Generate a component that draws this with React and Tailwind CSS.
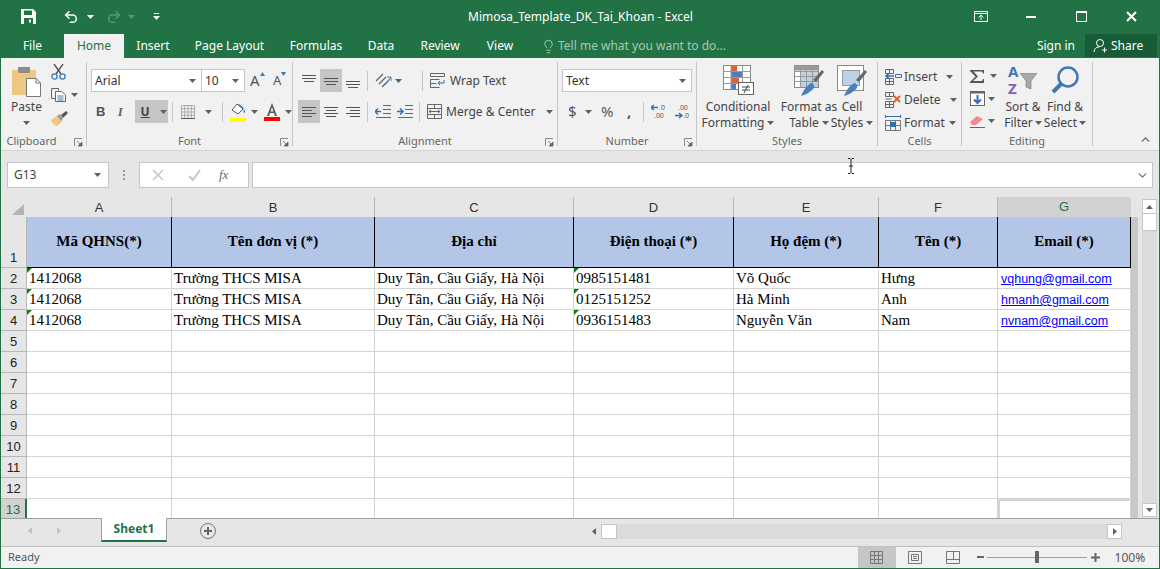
import { Undo2, Redo2, Lightbulb, ChevronDown, ChevronUp } from "lucide-react";

const uiFont = { fontFamily: '"Noto Sans", "Open Sans", sans-serif' };

const Caret = ({ className = "" }) => (
  <svg width="7" height="4" viewBox="0 0 7 4" className={`shrink-0 ${className}`}>
    <path d="M0 0h7L3.5 4z" fill="#606060" />
  </svg>
);

const Launcher = () => (
  <svg width="9" height="9" viewBox="0 0 9 9" className="absolute right-[3px] top-[3px]">
    <path d="M0.5 8V0.5H8" fill="none" stroke="#8a8a8a" />
    <path d="M3 3l4 4M8 4v4H4z" fill="#666" stroke="#666" strokeWidth="0.8" />
  </svg>
);

const Group = ({ className, label, launcher, children }) => (
  <div className={`flex flex-col h-[84px] shrink-0 border-r border-[#c6c6c6] ${className}`}>
    <div className="h-[73px] shrink-0">{children}</div>
    <div className="relative h-[11px] flex items-center justify-center text-[11px] text-[#666] leading-none">
      {label}
      {launcher && <Launcher />}
    </div>
  </div>
);

const Lines = ({ rows }) => (
  <svg width="16" height="14" viewBox="0 0 16 14">
    {rows.map(([x1, x2, y]) => (
      <path key={y} d={`M${x1} ${y + 0.5}H${x2}`} stroke="#555" />
    ))}
  </svg>
);

const Paste = () => (
  <svg width="29" height="30" viewBox="0 0 29 30">
    <rect x="0" y="3" width="24" height="25" rx="1" fill="#eec880" />
    <rect x="6" y="0" width="12" height="6" rx="1" fill="#8c8c8c" />
    <path d="M14.5 11.5H24l4.5 4.5V29.5H14.5z" fill="#fff" stroke="#777" />
    <path d="M24 11.5V16h4.5" fill="none" stroke="#777" />
  </svg>
);

const Scissors = () => (
  <svg width="15" height="16" viewBox="0 0 15 16" fill="none">
    <path d="M3 0l7 10M12 0L5 10" stroke="#555" strokeWidth="1.4" />
    <circle cx="3.5" cy="12.5" r="2.6" stroke="#3f78b5" strokeWidth="1.3" />
    <circle cx="11.5" cy="12.5" r="2.6" stroke="#3f78b5" strokeWidth="1.3" />
  </svg>
);

const CopyIcon = () => (
  <svg width="15" height="14" viewBox="0 0 15 14" fill="none">
    <path d="M.5.5h7v2M.5.5v10h4" stroke="#666" />
    <path d="M4.5 3.5h6l4 3.5v6.5h-10z" fill="#fff" stroke="#666" />
    <path d="M6.5 8h6M6.5 10h6M6.5 12h6" stroke="#3f78b5" />
  </svg>
);

const Brush = () => (
  <svg width="17" height="15" viewBox="0 0 17 15">
    <path d="M0 9l6-4 5 6-5 4C4 15 1 12 0 9z" fill="#eec880" />
    <path d="M6 5l3-2 3 5-2 2z" fill="#9a9a9a" />
    <path d="M10 4l5-4 2 2-5 5z" fill="#555" />
  </svg>
);

const BordersIcon = () => (
  <svg width="14" height="14" viewBox="0 0 14 14" fill="none">
    <path d="M.5.5h13v13h-13zM7 .5v13M.5 7h13M3.7.5v13M10.3.5v13M.5 3.7h13M.5 10.3h13" stroke="#777" strokeDasharray="1 1" />
    <path d="M0 13.5h14" stroke="#555" />
  </svg>
);

const FillColor = () => (
  <svg width="16" height="20" viewBox="0 0 16 20">
    <path d="M2 8l5-6 6 5-5 5z" fill="#fff" stroke="#555" />
    <path d="M14 7c1 2 1.500 3 .5 4-1-.5-1.500-2-.5-4z" fill="#3f78b5" />
    <path d="M9 2l5 4-1 1-5-4z" fill="#3f78b5" />
    <rect y="16" width="16" height="4" fill="#ffff00" />
  </svg>
);

const FontColor = () => (
  <svg width="16" height="20" viewBox="0 0 16 20">
    <path d="M8 1L3 14h2l1-3h4l1 3h2L8 1zm0 4l1.500 4.500h-3z" fill="#555" />
    <rect y="15" width="16" height="4" fill="#ff0000" />
  </svg>
);

const Orientation = () => (
  <svg width="18" height="18" viewBox="0 0 18 18" fill="none">
    <path d="M1 9l7-7M4 12l7-7M7 15l7-7" stroke="#666" strokeWidth="1.300" />
    <path d="M10 13l6-8M16 5v4M16 5h-4" stroke="#3f78b5" />
  </svg>
);

const Indent = ({ flip }) => (
  <svg width="16" height="13" viewBox="0 0 16 13" fill="none">
    <path d="M8 .5h8M8 4.500h8M8 8.500h8M1 12.500h15" stroke="#666" />
    {flip ? <path d="M0 6.500h6M3 3.500l-3 3 3 3" stroke="#2f6fb5" strokeWidth="1.500" /> : <path d="M0 6.500h6M3 3.500l3 3-3 3" stroke="#2f6fb5" strokeWidth="1.500" />}
  </svg>
);

const WrapIcon = () => (
  <svg width="15" height="15" viewBox="0 0 15 15" fill="none">
    <path d="M.5.5h14v3H.5zM.5 6.500h9M.5 6.500v8h9M.5 10.500h6" stroke="#666" />
    <path d="M14 7v3H8M10 8l-2 2 2 2" stroke="#2f6fb5" />
  </svg>
);

const MergeIcon = () => (
  <svg width="15" height="15" viewBox="0 0 15 15" fill="none">
    <path d="M.5.5h14v14H.5zM.5 4.500h14M.5 10.500h14M7.500.5v4M7.500 10.500v4" stroke="#666" />
    <path d="M2 7.500h11M4 6l-2 1.500L4 9M11 6l2 1.500L11 9" stroke="#2f6fb5" />
  </svg>
);

const DecimalIcon = ({ more }) => (
  <svg width="16" height="15" viewBox="0 0 16 15">
    <path d={more ? "M1 11.500h7M5 9l3 2.500L5 14" : "M0 3.500h7M3 1L0 3.500 3 6"} stroke="#2f6fb5" strokeWidth="1.400" fill="none" />
    <text x={more ? 4 : 8} y="6" fontSize="7" fill="#555" fontFamily="Liberation Sans">{more ? ".00" : ".0"}</text>
    <text x={more ? 9 : 3} y="14" fontSize="7" fill="#555" fontFamily="Liberation Sans">{more ? ".0" : ".00"}</text>
  </svg>
);

const CondFormat = () => (
  <svg width="31" height="30" viewBox="0 0 31 30" fill="none">
    <rect x=".5" y=".5" width="27" height="24" fill="#fff" stroke="#888" />
    <rect x="8" y="1" width="6" height="5" fill="#d9643a" />
    <rect x="8" y="7" width="11" height="5" fill="#4a80bd" />
    <rect x="8" y="13" width="8" height="5" fill="#d9643a" />
    <rect x="8" y="19" width="5" height="5" fill="#4a80bd" />
    <path d="M8 .5v24M19.500.5v24M.5 6.500h27M.5 12.500h27M.5 18.500h27" stroke="#999" />
    <rect x="15.500" y="17.500" width="15" height="12" fill="#fff" stroke="#666" />
    <path d="M19 22h8M19 25h8M25 20l-4 8" stroke="#444" />
  </svg>
);

const FormatTable = () => (
  <svg width="31" height="31" viewBox="0 0 31 31" fill="none">
    <rect x=".5" y=".5" width="24" height="22" fill="#fff" stroke="#888" />
    <rect x=".5" y=".5" width="24" height="5" fill="#999" />
    <rect x="6" y="6" width="18" height="16" fill="#bcd0e6" />
    <path d="M6.500.5v22M12.500.5v22M18.500.5v22M.5 6.500h24M.5 11.500h24M.5 16.500h24" stroke="#999" />
    <path d="M30 7l-8 10-3-2 9-10z" fill="#666" />
    <path d="M7 31c3-7 7-12 11-13 3 2 3 5 0 7-3 3-7 5-11 6z" fill="#4a80bd" />
  </svg>
);

const CellStyles = () => (
  <svg width="31" height="31" viewBox="0 0 31 31" fill="none">
    <rect x=".5" y=".5" width="26" height="25" fill="#fff" stroke="#888" />
    <rect x="5.500" y="5.500" width="17" height="15" fill="#bcd0e6" stroke="#999" />
    <path d="M30 7l-8 10-3-2 9-10z" fill="#666" />
    <path d="M7 31c3-7 7-12 11-13 3 2 3 5 0 7-3 3-7 5-11 6z" fill="#4a80bd" />
  </svg>
);

const InsertIcon = () => (
  <svg width="17" height="16" viewBox="0 0 17 16" fill="none">
    <path d="M.5.5h8v4h-8zM.5 9.500h8v6h-8zM4.500 9.500v6M.5 12.500h8M4.500.5v4" stroke="#666" />
    <path d="M1 7h8M4 4.500L1 7l3 2.500" stroke="#2f6fb5" strokeWidth="1.500" />
    <path d="M10.500 5.500h6v3h-6z" stroke="#2f6fb5" />
  </svg>
);

const DeleteIcon = () => (
  <svg width="17" height="16" viewBox="0 0 17 16" fill="none">
    <path d="M.5.5h8v4h-8zM.5 9.500h8v6h-8zM4.500 9.500v6M.5 12.500h8M4.500.5v4M.5 7h6" stroke="#666" />
    <path d="M9 4l6 6M15 4l-6 6" stroke="#e0603a" strokeWidth="2" />
  </svg>
);

const FormatIcon = () => (
  <svg width="16" height="16" viewBox="0 0 16 16" fill="none">
    <path d="M.5 5.500h15v10H.5zM.5 10.500h15M5.500 5.500v10M10.500 5.500v10" stroke="#777" />
    <rect x="5" y="7" width="6" height="5" fill="#2f6fb5" />
    <path d="M.5 0v3M15.500 0v3M1 1.500h14" stroke="#2f6fb5" />
  </svg>
);

const Sigma = () => (
  <svg width="15" height="13" viewBox="0 0 15 13">
    <path d="M0 0h14v3.500h-1L12 1.500H3.500L8 6.500 3 11h9l1-2h1v4H0v-1l5.500-5.500L0 1z" fill="#555" />
  </svg>
);

const FillDown = () => (
  <svg width="15" height="15" viewBox="0 0 15 15" fill="none">
    <rect x=".5" y=".5" width="14" height="14" fill="#fff" stroke="#666" />
    <path d="M.5.5h14v2H.5z" fill="#666" />
    <path d="M7.500 4v8M4 8.500l3.500 3.500L11 8.500" stroke="#2f6fb5" strokeWidth="2" />
  </svg>
);

const Eraser = () => (
  <svg width="15" height="13" viewBox="0 0 15 13">
    <path d="M0 7l7-6 6 3-7 6H2z" fill="#f08a94" />
    <path d="M0 12.500h15" stroke="#666" />
  </svg>
);

const SortIcon = () => (
  <div className="relative w-[30px] h-[30px] mt-[5px]">
    <span className="absolute left-0 top-[-3px] text-[15px] font-bold text-[#3f78b5] leading-none">A</span>
    <span className="absolute left-0 top-[14px] text-[15px] font-bold text-[#8e5bb5] leading-none">Z</span>
    <svg width="18" height="17" viewBox="0 0 18 17" className="absolute right-0 top-[6px]">
      <path d="M0 0h17l-6 8v8l-5-2V8z" fill="#a8a8a8" stroke="#777" strokeWidth="0.6" />
    </svg>
  </div>
);

const FindIcon = () => (
  <svg width="28" height="28" viewBox="0 0 28 28" fill="none">
    <circle cx="17" cy="11" r="9.500" stroke="#3f78b5" strokeWidth="2.500" />
    <path d="M10 18L2 26" stroke="#3f78b5" strokeWidth="4" />
  </svg>
);

const tools = [
  ["Insert", InsertIcon, "ml-[9px]"],
  ["Delete", DeleteIcon, "ml-[9px]"],
  ["Format", FormatIcon, "ml-[4px]"],
];

const Ribbon = () => (
  <div className="flex h-[93px] pt-[4px] bg-[#f1f1f1] border-b border-[#d4d4d4] shrink-0 text-[12px] text-[#444]">
    <Group className="w-[86px]" label={<span className="mr-[24px]">Clipboard</span>} launcher>
      <div className="flex">
        <div className="w-[50px] flex flex-col items-center pt-[5px] pl-[1px]">
          <Paste />
          <span className="mt-[2px] leading-[16px]">Paste</span>
          <Caret className="mt-[6px]" />
        </div>
        <div className="flex flex-col pt-[2px]">
          <Scissors />
          <div className="flex items-center mt-[8px]"><CopyIcon /><Caret className="ml-[5px]" /></div>
          <div className="mt-[9px]"><Brush /></div>
        </div>
      </div>
    </Group>

    <Group className="w-[206px]" label="Font" launcher>
      <div className="flex items-center pl-[4px] pt-[7px]">
        <div className="w-[111px] h-[23px] bg-white border border-[#c6c6c6] flex items-center justify-between px-[3px]">
          <span className="text-[#333]">Arial</span><Caret className="mr-[2px]" />
        </div>
        <div className="w-[43px] h-[23px] bg-white border border-[#c6c6c6] border-l-0 flex items-center justify-between px-[3px]">
          <span className="text-[#333]">10</span><Caret className="mr-[2px]" />
        </div>
        <div className="relative ml-[5px] w-[15px] text-[15px] leading-none text-[#555]">A<span className="absolute right-[0px] top-[-1px]"><svg width="5" height="4"><path d="M0 4h5L2.500 0z" fill="#3f78b5" /></svg></span></div>
        <div className="relative ml-[8px] w-[13px] text-[13px] leading-none text-[#555]">A<span className="absolute right-[0px] top-[-2px]"><svg width="5" height="4"><path d="M0 0h5L2.500 4z" fill="#3f78b5" /></svg></span></div>
      </div>
      <div className="flex items-center h-[23px] mt-[8px] pl-[9px]">
        <span className="w-[10px] text-[13px] font-bold text-[#555]" style={{ fontFamily: "Liberation Sans" }}>B</span>
        <span className="ml-[12px] w-[10px] text-[13px] italic font-bold text-[#666]" style={{ fontFamily: "Liberation Serif" }}>I</span>
        <div className="ml-[7px] w-[34px] h-[23px] bg-[#c6c6c6] flex items-center pl-[6px]">
          <span className="w-[9px] text-[12px] font-bold underline text-[#444]">U</span><Caret className="ml-[10px]" />
        </div>
        <div className="ml-[4px] w-px h-[20px] bg-[#c6c6c6]" />
        <div className="ml-[8px]"><BordersIcon /></div>
        <Caret className="ml-[10px]" />
        <div className="ml-[10px] w-px h-[20px] bg-[#c6c6c6]" />
        <div className="ml-[7px]"><FillColor /></div>
        <Caret className="ml-[5px]" />
        <div className="ml-[6px]"><FontColor /></div>
        <Caret className="ml-[5px]" />
      </div>
    </Group>

    <Group className="w-[265px]" label="Alignment" launcher>
      <div className="flex items-center pl-[5px] pt-[7px] h-[30px]">
        <div className="w-[22px] h-[23px] flex items-center justify-center"><Lines rows={[[1, 15, 1], [1, 15, 4], [3, 13, 7]]} /></div>
        <div className="w-[22px] h-[23px] bg-[#c6c6c6] flex items-center justify-center"><Lines rows={[[1, 15, 4], [1, 15, 7], [3, 13, 10]]} /></div>
        <div className="w-[22px] h-[23px] flex items-center justify-center"><Lines rows={[[1, 15, 7], [1, 15, 10], [3, 13, 13]]} /></div>
        <div className="ml-[3px] w-px h-[20px] bg-[#c6c6c6]" />
        <div className="ml-[7px]"><Orientation /></div>
        <Caret className="ml-[2px]" />
        <div className="ml-[20px] w-px h-[20px] bg-[#c6c6c6]" />
        <div className="ml-[7px]"><WrapIcon /></div>
        <span className="ml-[5px]">Wrap Text</span>
      </div>
      <div className="flex items-center pl-[5px] h-[23px] mt-[8px]">
        <div className="w-[22px] h-[23px] bg-[#c6c6c6] flex items-center justify-center"><Lines rows={[[1, 15, 2], [1, 11, 5], [1, 15, 8], [1, 11, 11]]} /></div>
        <div className="w-[22px] h-[23px] flex items-center justify-center"><Lines rows={[[1, 15, 2], [3, 13, 5], [1, 15, 8], [3, 13, 11]]} /></div>
        <div className="w-[22px] h-[23px] flex items-center justify-center"><Lines rows={[[1, 15, 2], [5, 15, 5], [1, 15, 8], [5, 15, 11]]} /></div>
        <div className="ml-[3px] w-px h-[20px] bg-[#c6c6c6]" />
        <div className="ml-[7px]"><Indent flip /></div>
        <div className="ml-[6px]"><Indent /></div>
        <div className="ml-[6px] w-px h-[20px] bg-[#c6c6c6]" />
        <div className="ml-[7px]"><MergeIcon /></div>
        <span className="ml-[4px]">Merge &amp; Center</span>
        <Caret className="ml-[10px]" />
      </div>
    </Group>

    <Group className="w-[139px]" label="Number" launcher>
      <div className="pl-[4px] pt-[7px]">
        <div className="w-[130px] h-[23px] bg-white border border-[#c6c6c6] flex items-center justify-between px-[3px]">
          <span className="text-[#333]">Text</span><Caret className="mr-[2px]" />
        </div>
      </div>
      <div className="flex items-center h-[23px] mt-[8px] pl-[10px]">
        <span className="w-[10px] text-[15px] text-[#555]">$</span>
        <Caret className="ml-[7px]" />
        <span className="ml-[9px] w-[14px] text-[15px] text-[#555]">%</span>
        <span className="ml-[12px] w-[6px] text-[15px] font-bold text-[#555]">,</span>
        <div className="ml-[10px] w-px h-[20px] bg-[#c6c6c6]" />
        <div className="ml-[7px]"><DecimalIcon /></div>
        <div className="ml-[7px]"><DecimalIcon more /></div>
      </div>
    </Group>

    <Group className="w-[181px]" label="Styles">
      <div className="flex pl-[5px] leading-[16px] text-center">
        <div className="w-[72px] flex flex-col items-center">
          <div className="h-[37px] pt-[3px]"><CondFormat /></div>
          <span>Conditional</span>
          <span className="flex items-center whitespace-nowrap">Formatting<Caret className="ml-[3px]" /></span>
        </div>
        <div className="ml-[9px] w-[52px] flex flex-col items-center">
          <div className="h-[37px] pt-[3px]"><FormatTable /></div>
          <span className="whitespace-nowrap">Format as</span>
          <span className="flex items-center">Table<Caret className="ml-[3px]" /></span>
        </div>
        <div className="w-[34px] flex flex-col items-center">
          <div className="h-[37px] pt-[3px]"><CellStyles /></div>
          <span>Cell</span>
          <span className="flex items-center">Styles<Caret className="ml-[3px]" /></span>
        </div>
      </div>
    </Group>

    <Group className="w-[84px]" label="Cells">
      <div className="flex flex-col pl-[7px] pt-[3px]">
        {tools.map(([name, Icon, caret]) => (
          <div key={name} className="flex items-center h-[23px]">
            <div className="w-[19px]"><Icon /></div>
            <span className="leading-none">{name}</span>
            <Caret className={caret} />
          </div>
        ))}
      </div>
    </Group>

    <Group className="w-[131px]" label="Editing">
      <div className="flex leading-[16px]">
        <div className="w-[41px] pl-[8px] pt-[3px] flex flex-col">
          <div className="flex items-center h-[22px]"><Sigma /><Caret className="ml-[5px]" /></div>
          <div className="flex items-center h-[23px]"><FillDown /><Caret className="ml-[3px]" /></div>
          <div className="flex items-center h-[22px]"><Eraser /><Caret className="ml-[3px]" /></div>
        </div>
        <div className="w-[40px] flex flex-col items-center">
          <div className="h-[37px]"><SortIcon /></div>
          <span className="whitespace-nowrap">Sort &amp;</span>
          <span className="flex items-center">Filter<Caret className="ml-[2px]" /></span>
        </div>
        <div className="w-[44px] flex flex-col items-center">
          <div className="h-[37px] pt-[4px]"><FindIcon /></div>
          <span className="whitespace-nowrap">Find &amp;</span>
          <span className="flex items-center">Select<Caret className="ml-[2px]" /></span>
        </div>
      </div>
    </Group>

    <div className="flex-1 h-[84px] flex items-end justify-end pr-[7px]">
      <ChevronUp size={13} strokeWidth={2.5} color="#666" />
    </div>
  </div>
);

const FormulaBar = () => (
  <div className="relative flex items-start h-[46px] pt-[11px] pl-[6px] pr-[6px] bg-[#e6e6e6] shrink-0">
    <div className="w-[102px] h-[26px] bg-white border border-[#c6c6c6] flex items-center justify-between pl-[6px] pr-[6px] text-[12px] text-[#444]">
      G13<Caret className="mr-[1px]" />
    </div>
    <div className="w-[30px] h-[26px] flex flex-col items-center justify-center gap-[2px]">
      <span className="w-[2px] h-[2px] bg-[#999]" />
      <span className="w-[2px] h-[2px] bg-[#999]" />
      <span className="w-[2px] h-[2px] bg-[#999]" />
    </div>
    <div className="w-[110px] h-[26px] bg-white border border-[#c6c6c6] flex items-center pl-[12px]">
      <svg width="12" height="12" viewBox="0 0 12 12"><path d="M1 1l10 10M11 1L1 11" stroke="#c6c6c6" strokeWidth="1.500" /></svg>
      <svg width="13" height="12" viewBox="0 0 13 12" className="ml-[24px]"><path d="M1 7l4 4 7-10" fill="none" stroke="#c6c6c6" strokeWidth="2" /></svg>
      <span className="ml-[18px] text-[13px] italic text-[#666]" style={{ fontFamily: "Liberation Serif" }}>fx</span>
    </div>
    <div className="ml-[3px] flex-1 h-[26px] bg-white border border-[#c6c6c6] flex items-center justify-end pr-[3px]">
      <ChevronDown size={13} strokeWidth={2.5} color="#777" />
    </div>
    <svg width="8" height="16" viewBox="0 0 8 16" className="absolute left-[846px] top-[7px]" fill="none">
      <path d="M1 .5h2l1 1 1-1h2M4 1.500v13M1 15.500h2l1-1 1 1h2M2 8h4" stroke="#222" />
    </svg>
  </div>
);

const columns = [
  ["A", "Mã QHNS(*)"],
  ["B", "Tên đơn vị (*)"],
  ["C", "Địa chỉ"],
  ["D", "Điện thoại (*)"],
  ["E", "Họ đệm (*)"],
  ["F", "Tên (*)"],
  ["G", "Email (*)"],
];

const rows = [
  ["1412068", "Trường THCS MISA", "Duy Tân, Cầu Giấy, Hà Nội", "0985151481", "Võ Quốc", "Hưng", "vqhung@gmail.com"],
  ["1412068", "Trường THCS MISA", "Duy Tân, Cầu Giấy, Hà Nội", "0125151252", "Hà Minh", "Anh", "hmanh@gmail.com"],
  ["1412068", "Trường THCS MISA", "Duy Tân, Cầu Giấy, Hà Nội", "0936151483", "Nguyễn Văn", "Nam", "nvnam@gmail.com"],
];

const emptyRows = [5, 6, 7, 8, 9, 10, 11, 12];
const gridCols = "grid grid-cols-[26px_145px_203px_199px_160px_145px_119px_133px]";

const Flag = () => (
  <svg width="5" height="5" viewBox="0 0 5 5" className="absolute left-0 top-0"><path d="M0 0h5L0 5z" fill="#107c10" /></svg>
);

const RowHead = ({ n, active, tall }) => (
  <div className={`flex justify-center items-end text-[13px] leading-[19px] border-b border-r ${tall ? "h-[51px]" : "h-[21px]"} ${active ? "bg-[#d2d2d2] text-[#217346] border-r-2 border-r-[#217346] border-b-[#b0b0b0]" : "bg-[#e6e6e6] text-[#222] border-[#b8b8b8]"}`} style={{ fontFamily: "Liberation Sans" }}>
    {n}
  </div>
);

const Cell = ({ children, className = "" }) => (
  <div className={`relative h-[21px] bg-white border-b border-r border-[#d4d4d4] whitespace-nowrap overflow-hidden pl-[2px] leading-[21px] ${className}`}>
    {children}
  </div>
);

const Sheet = () => (
  <div className="flex flex-1 min-h-0 bg-[#e6e6e6]">
    <div className="w-[1137px] shrink-0 flex flex-col overflow-hidden">
      <div className={`${gridCols} h-[20px] shrink-0 text-[13px] text-[#333]`} style={{ fontFamily: "Liberation Sans" }}>
        <div className="flex items-end justify-end pr-[3px] pb-[3px] border-b border-[#9f9f9f]">
          <svg width="12" height="11" viewBox="0 0 12 11"><path d="M12 0v11H0z" fill="#b4b4b4" /></svg>
        </div>
        {columns.map(([letter], i) => (
          <div key={letter} className={`flex items-center justify-center border-r ${i === 6 ? "bg-[#d2d2d2] text-[#217346] border-b-2 border-b-[#217346] border-r-[#d2d2d2]" : "border-b border-b-[#9f9f9f] border-r-[#b8b8b8]"} `}>
            {letter}
          </div>
        ))}
      </div>

      <div className="flex-1 min-h-0 overflow-hidden bg-[#c8c8c8]" style={{ fontFamily: "Liberation Serif" }}>
        <div className={`${gridCols} text-[15px] text-black`}>
          <RowHead n={1} tall />
          {columns.map(([letter, title]) => (
            <div key={letter} className="h-[51px] bg-[#b4c6e7] border-r border-b border-black flex items-center justify-center text-[15px] font-bold pb-[1px]">
              {title}
            </div>
          ))}
          {rows.map((row, r) => (
            <div key={r} className="contents">
              <RowHead n={r + 2} />
              {row.map((value, c) => (
                c === 6 ? (
                  <Cell key={c}><span className="text-[12.500px] text-[#0000ff] underline pl-[1px]" style={{ fontFamily: "Liberation Sans" }}>{value}</span></Cell>
                ) : (
                  <Cell key={c}>{(c === 0 || c === 3) && <Flag />}{value}</Cell>
                )
              ))}
            </div>
          ))}
          {emptyRows.map((n) => (
            <div key={n} className="contents">
              <RowHead n={n} />
              <Cell /><Cell /><Cell /><Cell /><Cell /><Cell /><Cell />
            </div>
          ))}
          <RowHead n={13} active />
          <Cell /><Cell /><Cell /><Cell /><Cell /><Cell />
          <Cell className="border-2 border-[#217346]" />
        </div>
      </div>
    </div>
    <div className="flex-1 pl-[4px] pr-[3px] pt-[2px] pb-[1px]">
      <div className="w-[15px] h-full bg-[#dbdbdb] flex flex-col justify-between">
        <div className="flex flex-col">
          <div className="h-[15px] bg-white border border-[#c6c6c6] flex items-center justify-center">
            <svg width="7" height="4"><path d="M0 4h7L3.500 0z" fill="#606060" /></svg>
          </div>
          <div className="h-[17px] bg-white border border-[#c6c6c6] border-t-0" />
        </div>
        <div className="h-[14px] bg-white border border-[#c6c6c6] flex items-center justify-center">
          <Caret />
        </div>
      </div>
    </div>
  </div>
);

const TabBar = () => (
  <div className="flex h-[28px] shrink-0 bg-[#e6e6e6] border-t border-[#9f9f9f]">
    <div className="w-[100px] flex items-center pl-[27px] pb-[5px] shrink-0">
      <svg width="4" height="7"><path d="M4 0v7L0 3.500z" fill="#c0c0c0" /></svg>
      <svg width="4" height="7" className="ml-[25px]"><path d="M0 0v7l4-3.500z" fill="#c0c0c0" /></svg>
    </div>
    <div className="w-[66px] h-[24px] bg-white border-x border-[#9f9f9f] -mt-px shrink-0 border-b-2 border-b-[#217346] flex items-center justify-center text-[12px] font-bold text-[#217346]">
      Sheet1
    </div>
    <div className="ml-[33px] mt-[4px] w-[16px] h-[16px] rounded-full border border-[#777] flex items-center justify-center shrink-0">
      <svg width="10" height="10"><path d="M5 1v8M1 5h8" stroke="#666" strokeWidth="2" /></svg>
    </div>
    <div className="ml-[370px] flex h-[15px] mt-[5px] w-[536px] shrink-0 bg-[#dbdbdb]">
      <div className="w-[15px] h-[15px] bg-[#e6e6e6] flex items-center justify-center">
        <svg width="4" height="7"><path d="M4 0v7L0 3.500z" fill="#606060" /></svg>
      </div>
      <div className="w-[16px] h-[15px] bg-white border border-[#c6c6c6]" />
      <div className="flex-1" />
      <div className="w-[15px] h-[15px] bg-white border border-[#c6c6c6] flex items-center justify-center">
        <svg width="4" height="7"><path d="M0 0v7l4-3.500z" fill="#606060" /></svg>
      </div>
    </div>
  </div>
);

const StatusBar = () => (
  <div className="flex items-center h-[22px] shrink-0 bg-[#f1f1f1] border-t border-[#bfbfbf] text-[11px] text-[#555] pl-[7px]">
    <span>Ready</span>
    <div className="ml-[818px] w-[38px] h-[21px] bg-[#c6c6c6] flex items-center justify-center">
      <svg width="13" height="13" fill="none"><path d="M.5.5h12v12H.5zM4.500.5v12M8.500.5v12M.5 4.500h12M.5 8.500h12" stroke="#777" /></svg>
    </div>
    <svg width="14" height="13" className="ml-[12px]" fill="none"><path d="M.5.5h13v12H.5zM3.500 3.500h7v6h-7zM5 5.500h4M5 7.500h4" stroke="#777" /></svg>
    <svg width="14" height="13" className="ml-[24px]" fill="none"><path d="M.5.5h13v12H.5zM.5 8.500h13M7.500.5v8" stroke="#777" /></svg>
    <svg width="7" height="3" className="ml-[17px]"><path d="M0 0h7v2H0z" fill="#666" /></svg>
    <div className="relative ml-[3px] w-[100px] h-px bg-[#a0a0a0]">
      <div className="absolute left-[48px] top-[-6px] w-[4px] h-[12px] bg-[#666]" />
    </div>
    <svg width="9" height="9" className="ml-[4px]"><path d="M4.500 0v9M0 4.500h9" stroke="#666" strokeWidth="2" /></svg>
    <span className="ml-[15px] text-[12px]">100%</span>
  </div>
);

export default function App() {
  return (
    <div className="w-[1160px] h-[569px] flex flex-col overflow-hidden bg-[#217346] border-x border-b border-[#217346]" style={uiFont}>
      <div className="flex items-center h-[33px] shrink-0 text-white">
        <svg width="15" height="15" viewBox="0 0 15 15" className="ml-[20px]">
          <path d="M0 0h12l3 3v12H0z" fill="#fff" />
          <rect x="3" y="1.500" width="8" height="4.500" fill="#217346" />
          <rect x="3" y="9" width="9" height="6" fill="#217346" />
          <rect x="8" y="10.500" width="2" height="3" fill="#fff" />
        </svg>
        <Undo2 size={16} strokeWidth={2.2} className="ml-[27px]" />
        <svg width="7" height="4" className="ml-[8px]"><path d="M0 0h7L3.500 4z" fill="#fff" /></svg>
        <Redo2 size={16} strokeWidth={2.2} className="ml-[12px] text-[#5c9478]" />
        <svg width="7" height="4" className="ml-[6px]"><path d="M0 0h7L3.500 4z" fill="#5c9478" /></svg>
        <svg width="7" height="7" className="ml-[18px]"><path d="M1 .5h5" stroke="#fff" /><path d="M0 3h7L3.500 7z" fill="#fff" /></svg>
        <span className="ml-[308px] text-[12px] whitespace-nowrap">Mimosa_Template_DK_Tai_Khoan - Excel</span>
        <div className="ml-auto flex items-center">
          <svg width="14" height="11" fill="none"><path d="M.5.500h13v10H.5zM.5 2.500h13M7 9V4M4.500 6.500L7 4l2.500 2.500" stroke="#fff" /></svg>
          <div className="ml-[38px] w-[10px] h-[2px] bg-white" />
          <svg width="11" height="11" className="ml-[40px]" fill="none"><path d="M.5.500h10v10H.5z" stroke="#fff" /><path d="M0 1h11" stroke="#fff" strokeWidth="2" /></svg>
          <svg width="11" height="11" className="ml-[39px] mr-[22px]"><path d="M1 1l9 9M10 1l-9 9" stroke="#fff" strokeWidth="2" /></svg>
        </div>
      </div>

      <div className="flex items-end h-[25px] shrink-0 text-[12px] text-white">
        <div className="w-[63px] h-[24px] flex items-center justify-center">File</div>
        <div className="w-[60px] h-[24px] bg-[#f1f1f1] text-[#217346] flex items-center justify-center">Home</div>
        <div className="w-[58px] h-[24px] flex items-center justify-center">Insert</div>
        <div className="w-[95px] h-[24px] flex items-center justify-center">Page Layout</div>
        <div className="w-[78px] h-[24px] flex items-center justify-center">Formulas</div>
        <div className="w-[52px] h-[24px] flex items-center justify-center">Data</div>
        <div className="w-[66px] h-[24px] flex items-center justify-center">Review</div>
        <div className="w-[54px] h-[24px] flex items-center justify-center">View</div>
        <div className="ml-[14px] h-[24px] flex items-center text-[#a5c8b5]">
          <Lightbulb size={15} strokeWidth={1.5} />
          <span className="ml-[2px]">Tell me what you want to do...</span>
        </div>
        <div className="ml-auto h-[24px] flex items-center">Sign in</div>
        <div className="ml-[10px] mr-[2px] mb-px w-[72px] h-[23px] bg-[#185c37] flex items-center pl-[8px]">
          <svg width="15" height="15" viewBox="0 0 15 15" fill="none"><circle cx="7" cy="5" r="3.500" stroke="#fff" /><path d="M1 14c0-3 2-5 5-5M9 12h5M11.500 9.500v5" stroke="#fff" /></svg>
          <span className="ml-[3px]">Share</span>
        </div>
      </div>

      <Ribbon />
      <FormulaBar />
      <Sheet />
      <TabBar />
      <StatusBar />
    </div>
  );
}
